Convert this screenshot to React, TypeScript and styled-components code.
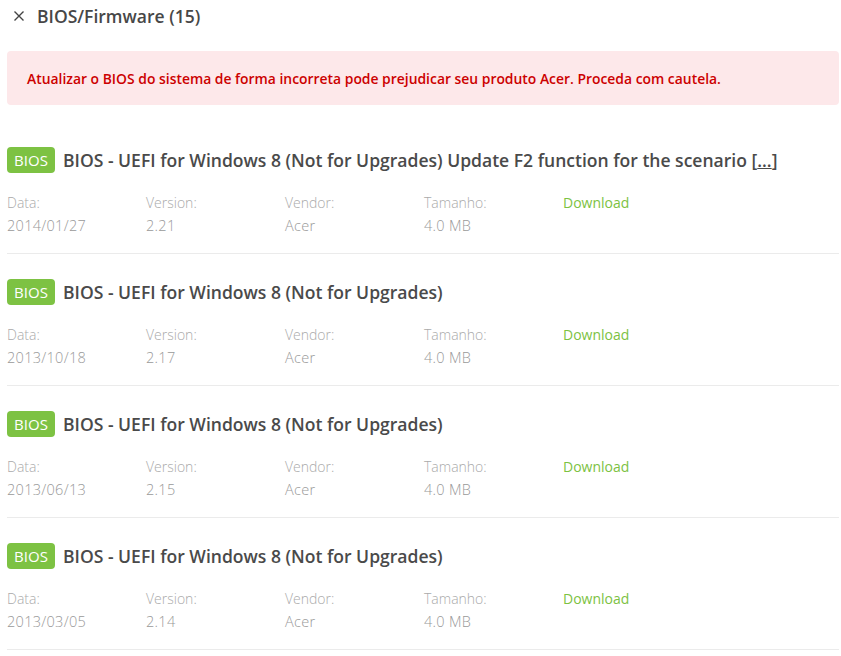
import React from "react";
import styled, { createGlobalStyle } from "styled-components";

const Global = createGlobalStyle`
  html, body { margin: 0; padding: 0; background: #fff; }
  body { font-family: "Open Sans", "Noto Sans", sans-serif; }
`;

const Page = styled.div`
  padding: 0 2px 0 7px;
  width: 841px;
  box-sizing: border-box;
`;

const Header = styled.div`
  display: flex;
  align-items: center;
  gap: 12px;
  height: 32px;
  padding-left: 6px;
  margin-bottom: 19px;
`;

const Close = styled.svg`
  width: 12px;
  height: 12px;
  flex: none;
`;

const HeaderTitle = styled.h1`
  margin: 0;
  font-size: 17.5px;
  font-weight: 600;
  color: #474747;
`;

const Alert = styled.div`
  background: #fde8ea;
  border-radius: 4px;
  height: 54px;
  display: flex;
  align-items: center;
  padding: 0 20px;
  color: #cc0000;
  font-size: 13.9px;
  font-weight: 600;
  margin-bottom: 18px;
`;

const Item = styled.div`
  padding: 24px 0 16px;
  border-bottom: 1px solid #ebebeb;
  & + & {
    padding-top: 25px;
  }
`;

const TitleRow = styled.div`
  display: flex;
  align-items: center;
  gap: 8px;
  height: 26px;
`;

const Badge = styled.span`
  background: #7dc243;
  color: #fff;
  border-radius: 4px;
  height: 26px;
  width: 48px;
  display: flex;
  align-items: center;
  justify-content: center;
  font-size: 15px;
  font-weight: 400;
`;

const Title = styled.span`
  font-size: 17.55px;
  color: #4a4a4a;
  font-weight: 600;
`;

const More = styled.span`
  text-decoration: underline;
`;

const Meta = styled.div`
  margin-top: 18px;
  display: grid;
  grid-template-columns: repeat(5, 139px);
`;

const Field = styled.div`
  display: flex;
  flex-direction: column;
  font-size: 14px;
  line-height: 23px;
  font-weight: 300;
`;

const Label = styled.span`
  color: #aaa;
`;

const Value = styled.span`
  color: #999;
  font-size: 14.5px;
  letter-spacing: 0.3px;
`;

const DownloadLink = styled.a`
  color: #7cc242;
  font-size: 14px;
  line-height: 23px;
  text-decoration: none;
  font-weight: 400;
`;

const items = [
  { title: "BIOS - UEFI for Windows 8 (Not for Upgrades) Update F2 function for the scenario", more: true, date: "2014/01/27", version: "2.21" },
  { title: "BIOS - UEFI for Windows 8 (Not for Upgrades)", more: false, date: "2013/10/18", version: "2.17" },
  { title: "BIOS - UEFI for Windows 8 (Not for Upgrades)", more: false, date: "2013/06/13", version: "2.15" },
  { title: "BIOS - UEFI for Windows 8 (Not for Upgrades)", more: false, date: "2013/03/05", version: "2.14" },
];

export default function App() {
  return (
    <Page>
      <Global />
      <Header>
        <Close viewBox="0 0 12 12">
          <path d="M1.5 1.5 L10.5 10.5 M10.5 1.5 L1.5 10.5" stroke="#444" strokeWidth="1.4" />
        </Close>
        <HeaderTitle>BIOS/Firmware (15)</HeaderTitle>
      </Header>
      <Alert>
        Atualizar o BIOS do sistema de forma incorreta pode prejudicar seu produto Acer. Proceda com cautela.
      </Alert>
      {items.map((it, i) => (
        <Item key={i}>
          <TitleRow>
            <Badge>BIOS</Badge>
            <Title>
              {it.title}
              {it.more && (
                <>
                  {" "}[<More>...</More>]
                </>
              )}
            </Title>
          </TitleRow>
          <Meta>
            <Field>
              <Label>Data:</Label>
              <Value>{it.date}</Value>
            </Field>
            <Field>
              <Label>Version:</Label>
              <Value>{it.version}</Value>
            </Field>
            <Field>
              <Label>Vendor:</Label>
              <Value>Acer</Value>
            </Field>
            <Field>
              <Label>Tamanho:</Label>
              <Value>4.0 MB</Value>
            </Field>
            <Field>
              <DownloadLink href="#">Download</DownloadLink>
            </Field>
          </Meta>
        </Item>
      ))}
    </Page>
  );
}
